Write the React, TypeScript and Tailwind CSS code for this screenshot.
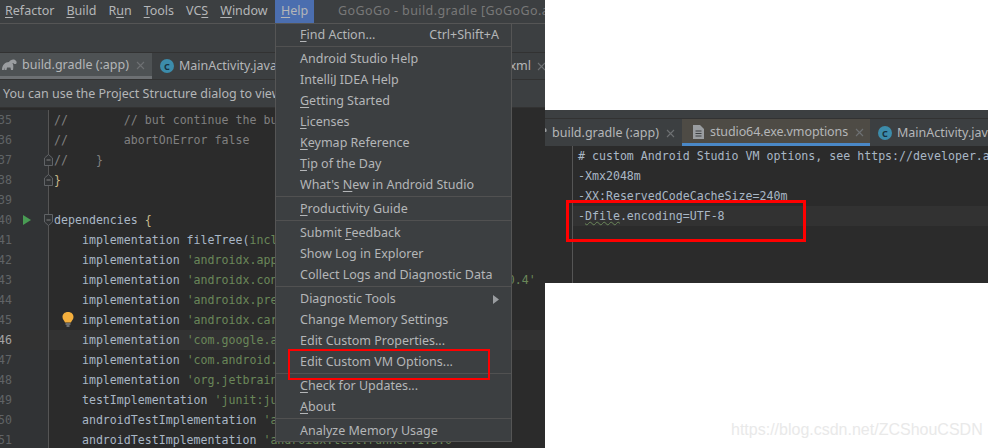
const uiFont = "font-['Noto_Sans',sans-serif]";
const monoFont = "font-['DejaVu_Sans_Mono',monospace]";

type Seg = { t: string; c?: string };
type IconKind = "foldEnd" | "foldStart" | "run" | "bulb";

const STR = "text-[#6a8759]";
const COM = "text-[#808080]";
const BRACE = "text-[#c8b98a]";

const leftLines: { n: number; segs: Seg[]; icons?: IconKind[]; active?: boolean }[] = [
  { n: 35, segs: [{ t: "//        // but continue the build", c: COM }] },
  { n: 36, segs: [{ t: "//        abortOnError false", c: COM }] },
  { n: 37, segs: [{ t: "//    }", c: COM }], icons: ["foldEnd"] },
  { n: 38, segs: [{ t: "}", c: BRACE }], icons: ["foldEnd"] },
  { n: 39, segs: [] },
  { n: 40, segs: [{ t: "dependencies " }, { t: "{", c: BRACE }], icons: ["run", "foldStart"] },
  { n: 41, segs: [{ t: "    implementation fileTree(" }, { t: "include: ['*.jar'], dir: 'libs'", c: STR }, { t: ")" }] },
  { n: 42, segs: [{ t: "    implementation " }, { t: "'androidx.appcompat:appcompat:1.2.0'", c: STR }] },
  { n: 43, segs: [{ t: "    implementation " }, { t: "'androidx.constraintlayout:constraintlayout:2.0.4'", c: STR }] },
  { n: 44, segs: [{ t: "    implementation " }, { t: "'androidx.preference:preference:1.1.1'", c: STR }] },
  { n: 45, segs: [{ t: "    implementation " }, { t: "'androidx.cardview:cardview:1.0.0'", c: STR }], icons: ["bulb"] },
  { n: 46, segs: [{ t: "    implementation " }, { t: "'com.google.android.material:material:1.2.1'", c: STR }], active: true },
  { n: 47, segs: [{ t: "    implementation " }, { t: "'com.android.support:design:28.0.0'", c: STR }] },
  { n: 48, segs: [{ t: "    implementation " }, { t: "'org.jetbrains.kotlin:kotlin-stdlib:1.4.10'", c: STR }] },
  { n: 49, segs: [{ t: "    testImplementation " }, { t: "'junit:junit:4.13'", c: STR }] },
  { n: 50, segs: [{ t: "    androidTestImplementation " }, { t: "'androidx.test.ext:junit:1.1.2'", c: STR }] },
  { n: 51, segs: [{ t: "    androidTestImplementation " }, { t: "'androidx.test:runner:1.3.0'", c: STR }] },
];

const menuGroups: string[][] = [
  ["_Find Action..."],
  [
    "Android Studio Help",
    "IntelliJ IDEA Help",
    "_Getting Started",
    "_Licenses",
    "_Keymap Reference",
    "_Tip of the Day",
    "What's _New in Android Studio",
  ],
  ["_Productivity Guide"],
  ["Submit _Feedback", "Show Log in Explorer", "Collect Logs and Diagnostic Data"],
  ["Diagnostic Tools", "Change Memory Settings", "Edit Custom Properties...", "Edit Custom VM Options..."],
  ["_Check for Updates...", "_About"],
  ["Analyze Memory Usage"],
];

function Mnemonic({ label }: { label: string }) {
  const i = label.indexOf("_");
  if (i < 0) return <>{label}</>;
  return (
    <>
      {label.slice(0, i)}
      <u className="underline-offset-2">{label[i + 1]}</u>
      {label.slice(i + 2)}
    </>
  );
}

function Elephant({ className }: { className?: string }) {
  return (
    <svg viewBox="0 0 16 12" className={className} fill="#9a9da0">
      <path d="M1 11 C1 6 4 3 8 3 C9 1 12 0 14 1 C16 2 16 4 15 5 L13 5 C12.600 4 12 3.800 11.500 4.200 C12.500 5.500 12.500 8 12 11 L10 11 L9.500 8.500 L6 8.500 L5.500 11 L3.500 11 L3.500 8.500 L2.800 11 Z" />
    </svg>
  );
}

function ClassIcon() {
  return (
    <span className="w-[14px] h-[14px] rounded-full bg-[#3c8cab] flex items-center justify-center shrink-0">
      <span className={`text-[9px] leading-none font-bold text-[#16323f] ${uiFont}`}>C</span>
    </span>
  );
}

function CloseX() {
  return (
    <svg viewBox="0 0 9 9" className="w-[9px] h-[9px] shrink-0" stroke="#6e7173" strokeWidth="1.1">
      <path d="M1 1 L8 8 M8 1 L1 8" />
    </svg>
  );
}

function GutterIcon({ kind }: { kind: IconKind }) {
  if (kind === "run") {
    return (
      <svg viewBox="0 0 8 10" className="absolute left-[23px] top-[5px] w-[8px] h-[10px]">
        <path d="M0 0 L8 5 L0 10 Z" fill="#499c54" />
      </svg>
    );
  }
  if (kind === "bulb") {
    return (
      <svg viewBox="0 0 12 16" className="absolute left-[62px] top-[2px] w-[12px] h-[16px]">
        <path d="M6 0 C2.500 0 0.500 2.300 0.500 5 C0.500 7.500 2.500 8.500 3 10.500 L9 10.500 C9.500 8.500 11.500 7.500 11.500 5 C11.500 2.300 9.500 0 6 0 Z" fill="#f4af3d" />
        <path d="M3.500 12 H8.500 M4.500 14 H7.500" stroke="#afb1b3" strokeWidth="1" />
      </svg>
    );
  }
  const d = kind === "foldEnd" ? "M0.500 4 L4.500 0.500 L8.500 4 V11.500 H0.500 Z" : "M0.500 0.500 H8.500 V8 L4.500 11.500 L0.500 8 Z";
  return (
    <svg viewBox="0 0 9 12" className="absolute left-[44px] top-[4px] w-[9px] h-[12px]">
      <path d={d} fill="#313335" stroke="#606366" strokeWidth="1" />
      <path d="M2.500 6 H6.500" stroke="#808080" strokeWidth="1" />
    </svg>
  );
}

function LeftEditor() {
  return (
    <div className={`flex-1 min-h-0 overflow-hidden bg-[#2b2b2b] text-[11.6px] pt-[2px] ${monoFont}`}>
      {leftLines.map((l) => (
        <div key={l.n} className={`relative flex h-[20px] leading-[20px] ${l.active ? "bg-[#323232]" : ""}`}>
          <div
            className={`w-[49px] shrink-0 overflow-hidden flex justify-end pr-[36px] border-r border-[#555555] ${
              l.active ? "bg-[#323232] text-[#a4a3a3]" : "bg-[#313335] text-[#606366]"
            }`}
          >
            <span className="shrink-0 whitespace-nowrap">{l.n}</span>
          </div>
          <div className="pl-[5px] whitespace-pre text-[#a9b7c6]">
            {l.segs.map((s, i) => (
              <span key={i} className={s.c}>
                {s.t}
              </span>
            ))}
          </div>
          {l.icons?.map((k) => <GutterIcon key={k} kind={k} />)}
        </div>
      ))}
    </div>
  );
}

function HelpMenu() {
  return (
    <div className={`absolute left-[275px] top-[23px] w-[237px] h-[419px] bg-[#3c3f41] border border-[#555555] text-[#b4b6b8] text-[12.5px] ${uiFont}`}>
      {menuGroups.map((group, gi) => (
        <div key={gi} className={gi > 0 ? "border-t border-[#515151] mt-[1px] pt-[1px]" : ""}>
          {group.map((label) => (
            <div key={label} className="relative flex items-center justify-between h-[21px] pt-[2px] pl-[24px] pr-[12px] leading-none whitespace-nowrap">
              <span>
                <Mnemonic label={label} />
              </span>
              {label === "_Find Action..." && <span>Ctrl+Shift+A</span>}
              {label === "Diagnostic Tools" && (
                <svg viewBox="0 0 6 9" className="w-[6px] h-[9px]">
                  <path d="M0 0 L6 4.500 L0 9 Z" fill="#9a9da0" />
                </svg>
              )}
            </div>
          ))}
        </div>
      ))}
    </div>
  );
}

function LeftWindow() {
  const menus = ["_Refactor", "_Build", "R_un", "_Tools", "VC_S", "_Window"];
  return (
    <div className={`relative w-[545px] h-[448px] shrink-0 overflow-hidden flex flex-col bg-[#3c3f41] ${uiFont}`}>
      {/* title / menu bar */}
      <div className="h-[24px] shrink-0 flex items-center border-b border-[#555555] text-[12.5px] text-[#b4b6b8] whitespace-nowrap">
        <div className="flex pl-[5px] gap-[12px] w-[275px] shrink-0">
          {menus.map((m) => (
            <span key={m}>
              <Mnemonic label={m} />
            </span>
          ))}
        </div>
        <div className="w-[39px] h-[23px] shrink-0 bg-[#4b6eaf] flex items-center justify-center">
          <Mnemonic label="_Help" />
        </div>
        <span className="ml-[24px] text-[#787878] tracking-[0.4px]">GoGoGo - build.gradle [GoGoGo.app]</span>
      </div>
      {/* toolbar */}
      <div className="h-[29px] shrink-0 border-b border-[#323232]" />
      {/* tabs */}
      <div className="h-[27px] shrink-0 flex items-stretch border-b border-[#323232] text-[12.5px] text-[#b4b6b8] whitespace-nowrap">
        <div className="w-[152px] shrink-0 flex items-center border-b-[3px] border-[#6d7073] bg-[#4e5254] pl-[1px] pt-[1px]">
          <Elephant className="w-[16px] h-[12px] mr-[5px]" />
          <span>build.gradle (:app)</span>
          <span className="ml-[7px]">
            <CloseX />
          </span>
        </div>
        <div className="w-[200px] shrink-0 flex items-center pl-[8px] gap-[5px] overflow-hidden">
          <ClassIcon />
          <span>MainActivity.java</span>
        </div>
        <div className="flex-1 min-w-0 flex items-center justify-end -mr-[1px] gap-[6px]">
          <span>xml</span>
          <CloseX />
        </div>
      </div>
      {/* notification */}
      <div className="h-[28px] shrink-0 flex items-center pl-[3px] pt-[2px] border-b border-[#323232] text-[12.5px] text-[#b4b6b8] whitespace-nowrap">
        You can use the Project Structure dialog to view
      </div>
      <LeftEditor />
      <HelpMenu />
      <div className="absolute left-[288px] top-[349px] w-[202px] h-[31px] border-2 border-[#ff0000]" />
    </div>
  );
}

function RightWindow() {
  const lines = [
    "# custom Android Studio VM options, see https://developer.android.com/studio",
    "-Xmx2048m",
    "-XX:ReservedCodeCacheSize=240m",
  ];
  return (
    <div className="relative mt-[110px] w-[443px] h-[173px] overflow-hidden flex flex-col bg-[#2b2b2b]">
      <div className="h-[9px] shrink-0 bg-[#3c3f41] border-b border-[#323232]" />
      <div className={`h-[27px] shrink-0 flex items-stretch bg-[#3c3f41] text-[12.5px] text-[#b4b6b8] whitespace-nowrap ${uiFont}`}>
        <div className="w-[137px] shrink-0 flex items-center pt-[1px]">
          <Elephant className="w-[16px] h-[12px] -ml-[14px] mr-[5px] shrink-0" />
          <span>build.gradle (:app)</span>
          <span className="ml-[7px]">
            <CloseX />
          </span>
        </div>
        <div className="w-[188px] shrink-0 flex items-center border-b-[3px] border-[#4a88c7] bg-[#4e4b45] pl-[11px] pt-[2px]">
          <svg viewBox="0 0 11 14" className="w-[11px] h-[14px] mr-[6px] shrink-0">
            <path d="M0 0 H7 L11 4 V14 H0 Z" fill="#9a9da0" />
            <path d="M2.500 6 H8.500 M2.500 8.500 H8.500 M2.500 11 H8.500" stroke="#3c3f41" strokeWidth="1" />
          </svg>
          <span className="tracking-[-0.1px]">studio64.exe.vmoptions</span>
          <span className="ml-[7px]">
            <CloseX />
          </span>
        </div>
        <div className="flex items-center pl-[8px] gap-[5px] pt-[1px]">
          <ClassIcon />
          <span>MainActivity.java</span>
        </div>
      </div>
      <div className={`relative flex-1 min-h-0 text-[11.6px] text-[#a9b7c6] ${monoFont}`}>
        <div className="absolute left-[27px] top-0 bottom-0 w-px bg-[#555555]" />
        {lines.map((l) => (
          <div key={l} className="h-[20px] leading-[20px] pl-[33px] whitespace-pre">
            {l}
          </div>
        ))}
        <div className="h-[20px] leading-[20px] ml-[28px] pl-[5px] bg-[#323232] whitespace-pre">
          -<span className="underline decoration-wavy decoration-[#6a8759] decoration-1 underline-offset-1">Dfile</span>.encoding=UTF-8
        </div>
      </div>
      <div className="absolute left-[21px] top-[90px] w-[240px] h-[42px] border-[3px] border-[#ff0000]" />
    </div>
  );
}

export default function App() {
  return (
    <div className="relative flex w-[991px] h-[448px] overflow-hidden bg-white">
      <LeftWindow />
      <RightWindow />
      <span className="absolute left-[731px] top-[420px] text-[16px] leading-[20px] text-[#e9e9e9] font-['Liberation_Sans',sans-serif] whitespace-nowrap">
        https://blog.csdn.net/ZCShouCSDN
      </span>
    </div>
  );
}
